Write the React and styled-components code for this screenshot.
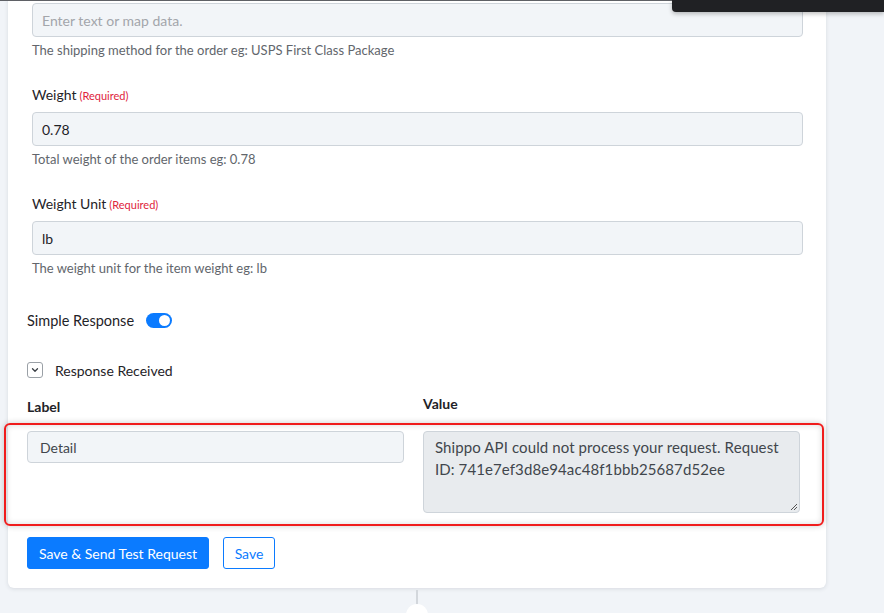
import React from "react";
import styled, { createGlobalStyle } from "styled-components";

const Global = createGlobalStyle`
  html, body { margin: 0; padding: 0; background: #f1f4f8; overflow: hidden; }
  body { font-family: Lato, "Open Sans", "Liberation Sans", sans-serif; color: #1f2328; }
  * { box-sizing: border-box; }
`;

const Page = styled.div`
  position: relative;
  width: 884px;
  height: 613px;
  overflow: hidden;
`;

const TopLine = styled.div`
  position: absolute;
  left: 0;
  top: 0;
  width: 672px;
  height: 1px;
  background: #5f6166;
  z-index: 3;
`;

const Tip = styled.div`
  position: absolute;
  right: 0;
  top: 0;
  width: 212px;
  height: 12px;
  background: #202124;
  border-bottom-left-radius: 4px;
  box-shadow: 0 2px 4px rgba(0, 0, 0, 0.25);
  z-index: 3;
`;

const Card = styled.div`
  margin: -20px 0 0 8px;
  width: 818px;
  background: #fff;
  border-radius: 6px;
  box-shadow: 0 1px 4px rgba(30, 40, 60, 0.12);
  padding: 23px 0 19px 0;
`;

const Fields = styled.div`
  padding: 0 23px 0 24px;
  display: flex;
  flex-direction: column;
`;

const Field = styled.div`
  display: flex;
  flex-direction: column;
  margin-bottom: ${(p) => p.$mb ?? 25}px;
`;

const Label = styled.div`
  font-size: 14px;
  height: 20px;
  line-height: 20px;
  color: #1f2328;
  margin-bottom: 7px;
  white-space: nowrap;
`;

const Req = styled.span`
  font-size: 11px;
  color: #e0243c;
  margin-left: 3px;
`;

const Input = styled.div`
  height: 34px;
  border: 1px solid #ced4da;
  border-radius: 4px;
  background: #f2f5f8;
  padding: 0 9px;
  display: flex;
  align-items: center;
  font-size: 14px;
  color: ${(p) => (p.$placeholder ? "#a3a6ab" : "#1f2328")};
`;

const Help = styled.div`
  font-size: 13px;
  height: 20px;
  line-height: 20px;
  color: #62666c;
  margin-top: 3px;
`;

const Section = styled.div`
  padding: 0 23px 0 19px;
  display: flex;
  flex-direction: column;
`;

const ToggleRow = styled.div`
  display: flex;
  align-items: center;
  gap: 12px;
  font-size: 14.5px;
  height: 20px;
  margin-top: 32px;
  color: #1f2328;
`;

const Switch = styled.span`
  position: relative;
  width: 26px;
  height: 15px;
  border-radius: 8px;
  background: #0b7bff;
  &::after {
    content: "";
    position: absolute;
    right: 2px;
    top: 2px;
    width: 11px;
    height: 11px;
    border-radius: 50%;
    background: #fff;
  }
`;

const CollapseRow = styled.div`
  display: flex;
  align-items: center;
  gap: 12px;
  font-size: 14px;
  height: 20px;
  margin-top: 30px;
  color: #1f2328;
`;

const ChevBox = styled.span`
  width: 16px;
  height: 16px;
  border: 1px solid #9aa0a6;
  border-radius: 3px;
  display: flex;
  align-items: center;
  justify-content: center;
`;

const Grid = styled.div`
  display: grid;
  grid-template-columns: 377px 377px;
  column-gap: 19px;
`;

const HeadRow = styled(Grid)`
  margin-top: 17px;
  font-weight: 700;
  font-size: 14px;
  height: 20px;
  line-height: 20px;
  color: #1f2328;
`;

const Col = styled.div`
  margin-top: ${(p) => (p.$up ? -3 : 0)}px;
`;

const PairRow = styled.div`
  position: relative;
  margin-top: 14px;
`;

const Highlight = styled.div`
  position: absolute;
  left: -23px;
  right: -21px;
  top: -8px;
  bottom: -13px;
  border: 2px solid #f01c1c;
  border-radius: 6px;
  box-shadow: 0 0 6px rgba(0, 0, 0, 0.2), inset 0 0 6px rgba(0, 0, 0, 0.15);
  pointer-events: none;
`;

const Cell = styled.div`
  height: 32px;
  border: 1px solid #ced4da;
  border-radius: 4px;
  background: #f2f5f8;
  padding: 0 12px;
  display: flex;
  align-items: center;
  font-size: 14px;
  color: #41464c;
`;

const Area = styled.div`
  position: relative;
  height: 82px;
  border: 1px solid #ced4da;
  border-radius: 4px;
  background: #e8ebee;
  padding: 4px 11px;
  font-size: 15px;
  letter-spacing: 0.1px;
  line-height: 22px;
  color: #41464c;
`;

const Grip = styled.svg`
  position: absolute;
  right: 1px;
  bottom: 1px;
`;

const Actions = styled.div`
  display: flex;
  gap: 14px;
  margin-top: 24px;
`;

const Btn = styled.button`
  height: 32px;
  padding: 0 10px;
  border-radius: 3px;
  font-family: inherit;
  font-size: 14px;
  border: 1px solid #0b7bff;
  background: ${(p) => (p.$outline ? "#fff" : "#0b7bff")};
  color: ${(p) => (p.$outline ? "#0b7bff" : "#fff")};
  width: ${(p) => p.$w}px;
  white-space: nowrap;
`;

const Connector = styled.div`
  display: flex;
  flex-direction: column;
  align-items: center;
  width: 818px;
  margin-left: 8px;
`;

const Stem = styled.div`
  width: 2px;
  height: 16px;
  margin-top: 2px;
  background: #d3d7dc;
`;

const Node = styled.div`
  width: 22px;
  height: 22px;
  border-radius: 50%;
  background: #fff;
  margin-top: -2px;
`;

const fields = [
  { label: "Weight", value: "0.78", help: "Total weight of the order items eg: 0.78" },
  { label: "Weight Unit", value: "lb", help: "The weight unit for the item weight eg: lb" },
];

export default function App() {
  return (
    <Page>
      <Global />
      <TopLine />
      <Tip />
      <Card>
        <Fields>
          <Field>
            <Input $placeholder>Enter text or map data.</Input>
            <Help>The shipping method for the order eg: USPS First Class Package</Help>
          </Field>
          {fields.map((f, i) => (
            <Field key={f.label} $mb={i === fields.length - 1 ? 0 : 25}>
              <Label>
                {f.label}
                <Req>(Required)</Req>
              </Label>
              <Input>{f.value}</Input>
              <Help>{f.help}</Help>
            </Field>
          ))}
        </Fields>
        <Section>
          <ToggleRow>
            Simple Response
            <Switch />
          </ToggleRow>
          <CollapseRow>
            <ChevBox>
              <svg width="10" height="10" viewBox="0 0 10 10">
                <path d="M2.5 3.8 L5 6.3 L7.5 3.8" fill="none" stroke="#3a3f45" strokeWidth="1.3" strokeLinecap="round" strokeLinejoin="round" />
              </svg>
            </ChevBox>
            Response Received
          </CollapseRow>
          <HeadRow>
            <Col>Label</Col>
            <Col $up>Value</Col>
          </HeadRow>
          <PairRow>
            <Grid>
              <Cell>Detail</Cell>
              <Area>
                Shippo API could not process your request. Request ID: 741e7ef3d8e94ac48f1bbb25687d52ee
                <Grip width="9" height="9" viewBox="0 0 9 9">
                  <path d="M8 2 L2 8 M8 5 L5 8" stroke="#555" strokeWidth="1" />
                </Grip>
              </Area>
            </Grid>
            <Highlight />
          </PairRow>
          <Actions>
            <Btn $w={182}>Save &amp; Send Test Request</Btn>
            <Btn $outline $w={52}>Save</Btn>
          </Actions>
        </Section>
      </Card>
      <Connector>
        <Stem />
        <Node />
      </Connector>
    </Page>
  );
}
